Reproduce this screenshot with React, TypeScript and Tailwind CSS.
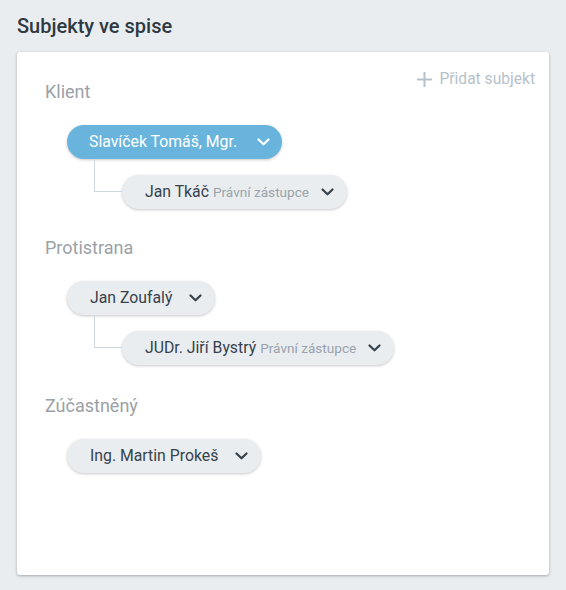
import { type FC } from 'react';

const Chevron: FC<{ className?: string }> = ({ className }) => (
  <svg width="13" height="8" viewBox="0 0 13 8" className={className} fill="none">
    <path d="M1.5 1.5 L6.5 6.3 L11.5 1.5" stroke="currentColor" strokeWidth="2.2" strokeLinecap="round" strokeLinejoin="round" />
  </svg>
);

interface ChipProps {
  name: string;
  role?: string;
  primary?: boolean;
}

const Chip: FC<ChipProps> = ({ name, role, primary }) => (
  <div
    className={
      primary
        ? 'inline-flex h-[34px] items-center rounded-full bg-[#69b4dc] pl-[22px] pr-[12px] text-white shadow-[0_1px_3px_rgba(0,0,0,0.22)]'
        : 'inline-flex h-[34px] items-center rounded-full bg-[#e9edf0] pl-[23px] pr-[13px] text-[#37424c] shadow-[0_1px_3px_rgba(0,0,0,0.22)]'
    }
  >
    <span className="text-[15.8px] leading-5">{name}</span>
    {role && <span className="ml-[4px] text-[13.6px] leading-5 text-[#9aa3ab]">{role}</span>}
    <Chevron
      className={primary ? 'ml-[20px] text-white' : role ? 'ml-[12px] text-[#37424c]' : 'ml-[17px] text-[#37424c]'}
    />
  </div>
);

const Group: FC<{ label: string; main: ChipProps; sub?: ChipProps; className?: string }> = ({
  label,
  main,
  sub,
  className,
}) => (
  <div className={className}>
    <div className="text-[18px] leading-6 text-[#9ba1a7]">{label}</div>
    <div className="ml-[22px] mt-[21px]">
      <Chip {...main} />
      {sub && (
        <div className="relative mt-4 pl-[55px]">
          {/* connector from the parent chip */}
          <div className="absolute left-[27px] top-[-16px] h-[33px] w-[28px] border-b border-l border-[#cfd8de]" />
          <Chip {...sub} />
        </div>
      )}
    </div>
  </div>
);

export default function App() {
  return (
    <div className="min-h-[590px] bg-[#e9edf0] px-[17px] pb-[15px] pt-3 font-['Roboto',sans-serif]">
      <h1 className="mb-3 text-[20px] font-medium leading-7 text-[#2f3942]">Subjekty ve spise</h1>
      <div className="relative h-[523px] rounded-[3px] bg-white px-7 pt-7 shadow-[0_1px_3px_rgba(0,0,0,0.3)]">
        <button className="absolute right-[14px] top-[17px] flex items-center gap-[7px] text-[15.6px] leading-5 text-[#b7c1c9]">
          <svg width="15" height="15" viewBox="0 0 15 15">
            <path d="M7.5 0 V15 M0 7.5 H15" stroke="currentColor" strokeWidth="2" />
          </svg>
          Přidat subjekt
        </button>

        <Group
          label="Klient"
          main={{ name: 'Slavíček Tomáš, Mgr.', primary: true }}
          sub={{ name: 'Jan Tkáč', role: 'Právní zástupce' }}
        />
        <Group
          className="mt-[27px]"
          label="Protistrana"
          main={{ name: 'Jan Zoufalý' }}
          sub={{ name: 'JUDr. Jiří Bystrý', role: 'Právní zástupce' }}
        />
        <Group className="mt-[29px]" label="Zúčastněný" main={{ name: 'Ing. Martin Prokeš' }} />
      </div>
    </div>
  );
}
